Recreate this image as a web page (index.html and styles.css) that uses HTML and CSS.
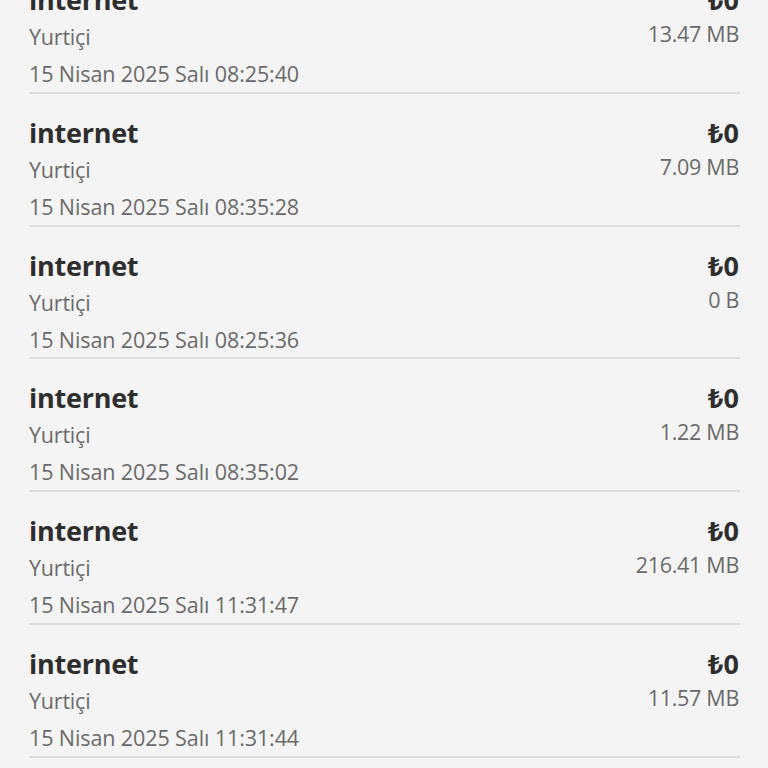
FILE: index.html
```html
<!DOCTYPE html>
<html lang="tr">
<head>
<meta charset="utf-8">
<title>Kullanım detayları</title>
<link rel="stylesheet" href="styles.css">
</head>
<body>
<div class="screen">
  <ul class="list">
    <li class="row">
      <div class="left">
        <div class="title">internet</div>
        <div class="sub">Yurtiçi</div>
        <div class="date">15 Nisan 2025 Salı 08:25:40</div>
      </div>
      <div class="right">
        <div class="price">₺0</div>
        <div class="amount">13.47 MB</div>
      </div>
    </li>
    <li class="row">
      <div class="left">
        <div class="title">internet</div>
        <div class="sub">Yurtiçi</div>
        <div class="date">15 Nisan 2025 Salı 08:35:28</div>
      </div>
      <div class="right">
        <div class="price">₺0</div>
        <div class="amount">7.09 MB</div>
      </div>
    </li>
    <li class="row">
      <div class="left">
        <div class="title">internet</div>
        <div class="sub">Yurtiçi</div>
        <div class="date">15 Nisan 2025 Salı 08:25:36</div>
      </div>
      <div class="right">
        <div class="price">₺0</div>
        <div class="amount">0 B</div>
      </div>
    </li>
    <li class="row">
      <div class="left">
        <div class="title">internet</div>
        <div class="sub">Yurtiçi</div>
        <div class="date">15 Nisan 2025 Salı 08:35:02</div>
      </div>
      <div class="right">
        <div class="price">₺0</div>
        <div class="amount">1.22 MB</div>
      </div>
    </li>
    <li class="row">
      <div class="left">
        <div class="title">internet</div>
        <div class="sub">Yurtiçi</div>
        <div class="date">15 Nisan 2025 Salı 11:31:47</div>
      </div>
      <div class="right">
        <div class="price">₺0</div>
        <div class="amount">216.41 MB</div>
      </div>
    </li>
    <li class="row">
      <div class="left">
        <div class="title">internet</div>
        <div class="sub">Yurtiçi</div>
        <div class="date">15 Nisan 2025 Salı 11:31:44</div>
      </div>
      <div class="right">
        <div class="price">₺0</div>
        <div class="amount">11.57 MB</div>
      </div>
    </li>
  </ul>
</div>
</body>
</html>
```

FILE: styles.css
```css
html, body {
  margin: 0;
  padding: 0;
  background: #f4f4f4;
  overflow: hidden;
}

.screen {
  height: 768px;
  overflow: hidden;
  background: #f4f4f4;
  font-family: "Open Sans", "Noto Sans", "DejaVu Sans", sans-serif;
}

.list {
  list-style: none;
  margin: -39px 0 0 0;
  padding: 0 28px 0 29px;
}

.row {
  display: flex;
  justify-content: space-between;
  align-items: flex-start;
  padding: 20px 0 0 0;
  height: 110.75px;
  border-bottom: 2px solid #dedede;
}

.left {
  display: flex;
  flex-direction: column;
}

.title {
  font-size: 27px;
  line-height: 38px;
  font-weight: 700;
  color: #2e2e2e;
  letter-spacing: -0.25px;
}

.sub {
  font-size: 21.5px;
  line-height: 36px;
  color: #6a6a6a;
  letter-spacing: -0.2px;
}

.date {
  font-size: 21.5px;
  line-height: 37px;
  color: #6a6a6a;
  letter-spacing: -0.1px;
}

.right {
  display: flex;
  flex-direction: column;
  align-items: flex-end;
  padding-right: 1px;
}

.price {
  font-size: 27px;
  line-height: 38px;
  font-weight: 700;
  color: #2e2e2e;
}

.amount {
  font-size: 21.5px;
  line-height: 29px;
  color: #6a6a6a;
  letter-spacing: -0.3px;
}
```
